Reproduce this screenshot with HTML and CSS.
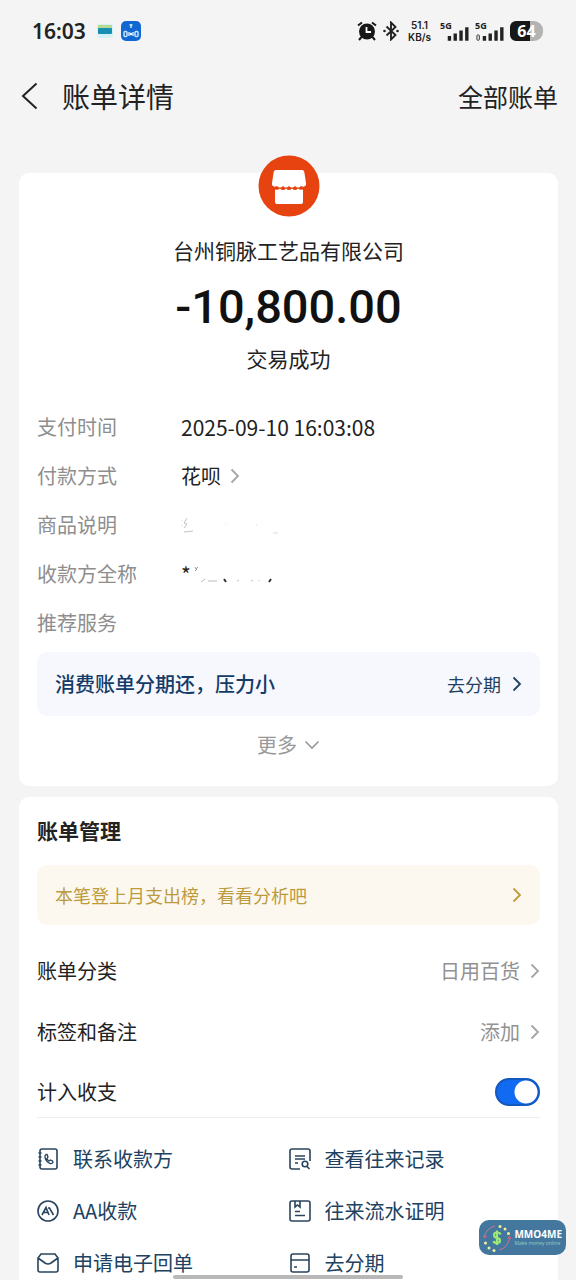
FILE: index.html
```html
<!DOCTYPE html>
<html lang="zh-CN">
<head>
<meta charset="utf-8">
<meta name="viewport" content="width=device-width, initial-scale=1">
<title>账单详情</title>
<link rel="stylesheet" href="styles.css">
</head>
<body>
<svg class="defs" aria-hidden="true">
  <symbol id="chev" viewBox="0 0 10 16"><path d="M1.500 1.500 8 8l-6.500 6.500" fill="none" stroke="currentColor" stroke-width="1.800"/></symbol>
</svg>
<div class="status-bar">
  <span class="time">16:03</span>
  <svg class="wallet" viewBox="0 0 16 14" aria-hidden="true"><rect width="16" height="14" rx="3" fill="#d5f1f7"/><path d="M1 1h14v4H1z" fill="#b7dc91"/><rect x="1" y="4" width="14" height="6" rx="1" fill="#168fb4"/></svg>
  <svg class="app" viewBox="0 0 20 20" aria-hidden="true"><rect width="20" height="20" rx="5" fill="#1268d3"/><g fill="none" stroke="#c4e5ff" stroke-width="1.500"><path d="M10 3v4M8.500 4h3"/><rect x="3" y="10.500" width="3" height="5" rx="1"/><rect x="14" y="10.500" width="3" height="5" rx="1"/><path d="M8 11v4M12 11v4"/></g><circle cx="10" cy="13" r="1.300" fill="#fff"/></svg>
  <span class="spacer"></span>
  <svg class="alarm" viewBox="0 0 20 20" aria-hidden="true"><circle cx="10" cy="10.500" r="8" fill="#171717"/><path d="M1 4.500 5 1.500M19 4.500l-4-3M4.500 16 2 19M15.500 16l2.500 3" stroke="#171717" stroke-width="2"/><path d="M9.500 6v5h4.500" fill="none" stroke="#fff" stroke-width="1.800"/></svg>
  <svg class="bt" viewBox="0 0 16 20" aria-hidden="true"><path d="m3.500 5.500 9 8.500L8 18.500v-17L12.500 6l-9 8.500" fill="none" stroke="#222" stroke-width="1.900"/><circle cx="1.500" cy="10" r="1.300" fill="#222"/><circle cx="14.500" cy="10" r="1.300" fill="#222"/></svg>
  <span class="speed"><span>51.1</span><span>KB/s</span></span>
  <span class="signal"><span class="net">5G</span><svg viewBox="0 0 30 14" aria-hidden="true"><path d="M8 9h3.500v5H8zM14 6.500h3.500V14H14zM20 3.500h3.500V14H20zM26 0h3.500v14H26z" fill="#222"/></svg></span>
  <span class="signal"><span class="net">5G</span><svg viewBox="0 0 30 14" aria-hidden="true"><rect x="2" y="8" width="2.500" height="5.500" rx="1" fill="none" stroke="#333"/><path d="M8 9h3.500v5H8zM14 6.500h3.500V14H14zM20 3.500h3.500V14H20zM26 0h3.500v14H26z" fill="#222"/></svg></span>
  <span class="battery">64</span>
</div>
<header class="nav">
  <button class="back" aria-label="返回"><svg viewBox="0 0 18 28" aria-hidden="true"><path d="M15.500 1.500 2 14l13.500 12.500" fill="none" stroke="#222" stroke-width="2"/></svg></button>
  <h1>账单详情</h1>
  <a class="all" href="#">全部账单</a>
</header>
<main>
  <section class="card summary">
    <svg class="shop" viewBox="0 0 62 62" aria-hidden="true"><circle cx="31" cy="31" r="30.500" fill="#e64310"/><path d="M18 15h26q2 0 2.300 2l1.700 11v2q-2 3-5 1-3 3-6 0-3 3-6 0-3 3-6 0-3 3-6 0-3 2-5-1v-2l1.700-11q.3-2 2.300-2z" fill="#fff"/><path d="M17 34.500q3 1 5-1 3 3 6 0 3 3 6 0 3 3 6 0 2 2 5 1V47q0 2-2 2H19q-2 0-2-2z" fill="#fff"/></svg>
    <p class="merchant">台州铜脉工艺品有限公司</p>
    <p class="amount">-10,800.00</p>
    <p class="state">交易成功</p>
    <dl class="details">
      <dt>支付时间</dt><dd>2025-09-10 16:03:08</dd>
      <dt>付款方式</dt><dd><a class="method" href="#">花呗<svg class="chev gray" aria-hidden="true"><use href="#chev"/></svg></a></dd>
      <dt>商品说明</dt><dd><svg class="mask" viewBox="0 0 100 20" aria-hidden="true"><g fill="none" stroke="#c3c3c3"><path d="m6 3-3 5 3 1-3 4M3 17l9-1" /><path d="M1 5v1M1 10v1M45 9v1M75 10h1M92 18h5" stroke="#ddd"/></g></svg></dd>
      <dt>收款方全称</dt><dd>*<svg class="mask" viewBox="0 0 100 20" aria-hidden="true"><g fill="none" stroke="#999"><path d="m4 3 1 2 2-2M4 7l2-2"/><path d="M10 18l4-3M17 17h9M46 17l2-1M60 17l2-1M68 16v1" stroke="#bbb"/><path d="m33 15 2 3M78 18l2-3" stroke="#333" stroke-width="2"/></g></svg></dd>
      <dt>推荐服务</dt><dd></dd>
    </dl>
    <a class="banner blue" href="#"><strong>消费账单分期还，压力小</strong><span class="go">去分期<svg class="chev" aria-hidden="true"><use href="#chev"/></svg></span></a>
    <button class="more">更多<svg viewBox="0 0 16 10" aria-hidden="true"><path d="m1.500 1.500 6.500 6.500 6.500-6.500" fill="none" stroke="currentColor" stroke-width="1.600"/></svg></button>
  </section>
  <section class="card manage">
    <h2>账单管理</h2>
    <a class="banner gold" href="#"><span>本笔登上月支出榜，看看分析吧</span><svg class="chev" aria-hidden="true"><use href="#chev"/></svg></a>
    <a class="row" href="#"><span>账单分类</span><span class="value">日用百货<svg class="chev gray" aria-hidden="true"><use href="#chev"/></svg></span></a>
    <a class="row" href="#"><span>标签和备注</span><span class="value">添加<svg class="chev gray" aria-hidden="true"><use href="#chev"/></svg></span></a>
    <label class="row last"><span>计入收支</span><input class="switch" type="checkbox" checked></label>
    <nav class="actions">
      <a href="#"><svg viewBox="0 0 22 22" aria-hidden="true"><rect x="3" y="1" width="17" height="20" rx="2"/><path d="M1.500 5h3M1.500 9h3M1.500 13h3M1.500 17h3"/><path d="M9 6.500q-1.500 1-1 3 1 4 5 6 2 .5 3-1l-.5-1.500-2-1-1.500 1q-1.500-1-2-2.500l1-1.500-1-2.500z" stroke-width="1.300"/></svg>联系收款方</a>
      <a href="#"><svg viewBox="0 0 22 22" aria-hidden="true"><path d="M11 21H3q-2 0-2-2V3q0-2 2-2h16q2 0 2 2v10M6 8h10M6 11h10M6 15h3"/><circle cx="16" cy="16" r="2.800"/><path d="m18 18.500 2.500 2.500"/></svg>查看往来记录</a>
      <a href="#"><svg viewBox="0 0 22 22" aria-hidden="true"><circle cx="11" cy="11" r="10"/><path d="m5 15 4-7.500 3 7.500M7 12.500h4M11 8h1.500l4 7"/></svg>AA收款</a>
      <a href="#"><svg viewBox="0 0 22 22" aria-hidden="true"><rect x="1" y="1" width="20" height="20" rx="2"/><path d="M6 1v6l2.500-2L11 7V1M6 11.500h5M6 15.500h10"/></svg>往来流水证明</a>
      <a href="#"><svg viewBox="0 0 22 22" aria-hidden="true"><path d="M4 2h14l3 4v12q0 2-2 2H3q-2 0-2-2V6zM1 6l7 5q3 2 6 0l7-5"/></svg>申请电子回单</a>
      <a href="#"><svg viewBox="0 0 22 22" aria-hidden="true"><rect x="2" y="2" width="18" height="18" rx="2"/><path d="M2 8h18M5 15h3"/></svg>去分期</a>
    </nav>
  </section>
</main>
<div class="home-bar"></div>
<div class="watermark">
  <svg viewBox="0 0 28 28" aria-hidden="true"><path d="M12 2Q3 4 1.500 13M16 26q9-2 10.500-12" fill="none" stroke="#c87695"/><path d="m0 11 1.500 3L4 12M24.500 15l2-3 1.500 3" fill="none" stroke="#e0607d"/><g fill="#f5ef9c"><circle cx="17" cy="2.500" r="1.500"/><circle cx="22" cy="5" r="1.500"/><circle cx="25.500" cy="9.500" r="1.500"/><circle cx="2.500" cy="19" r="1.500"/><circle cx="6" cy="24" r="1.500"/><circle cx="11" cy="26.500" r="1.500"/></g><path d="M17.500 10.500q-.5-2-3.500-2t-3 2.500 3 2.800 3 2.700-3 2.500-3.500-2M14 6.500v14.500" fill="none" stroke="#9de879" stroke-width="2.200"/></svg>
  <span class="brand"><b>MMO4ME</b><small>Make money online</small></span>
</div>
</body>
</html>
```
FILE: styles.css
```css
* { box-sizing: border-box; }
body {
  margin: 0;
  min-height: 100vh;
  display: flex;
  flex-direction: column;
  background: #f4f4f5;
  color: #222;
  font: 20px/28px "Noto Sans CJK SC", sans-serif;
}
h1, h2, p, dl, dd { margin: 0; }
a { color: inherit; text-decoration: none; }
button { border: 0; padding: 0; background: none; color: inherit; font: inherit; }
svg { display: block; flex: none; }
.defs { position: absolute; width: 0; height: 0; }
.spacer { flex: 1; }

.status-bar { display: flex; align-items: center; height: 62px; padding: 0 33px 0 32px; }
.time { font: 600 21px/28px "Noto Sans", sans-serif; }
.wallet { width: 16px; height: 14px; margin-left: 11px; }
.app { width: 20px; height: 20px; margin-left: 8px; }
.alarm { width: 20px; height: 20px; }
.bt { width: 16px; height: 20px; margin-left: 6px; }
.speed { display: flex; flex-direction: column; align-items: center; margin-left: 9px; font: 600 10px/12px Inter, sans-serif; }
.signal { display: flex; flex-direction: column; margin-left: 9px; width: 29px; height: 20px; }
.signal + .signal { margin-left: 6px; }
.signal .net { height: 6px; font: 700 9px/9px "Noto Sans", sans-serif; }
.signal svg { width: 29px; height: 14px; }
.battery {
  margin-left: 6px; width: 33px; border-radius: 6px 9px 9px 6px;
  background: linear-gradient(90deg, #171717 62%, #b3b3b3 62%);
  color: #fff; text-align: center; font: 700 16px/20px "Noto Sans", sans-serif;
}

.nav { display: flex; align-items: center; height: 68px; padding: 0 18px 0 21px; }
.back { width: 41px; }
.back svg { width: 18px; height: 28px; }
.nav h1 { flex: 1; font-size: 28px; font-weight: 400; line-height: 40px; }
.all { font-size: 25px; line-height: 36px; }

main { flex: 1; display: flex; flex-direction: column; gap: 11px; padding: 43px 18px 0 19px; }
.card { background: #fff; border-radius: 10px; padding: 0 18px; }
.summary { display: flex; flex-direction: column; padding-bottom: 27px; }
.shop { align-self: center; width: 62px; height: 62px; margin-top: -18px; }
.merchant { margin-top: 18px; text-align: center; font-size: 21px; line-height: 30px; }
.amount { margin-top: 14px; text-align: center; color: #111; font: 500 47px/56px Roboto, sans-serif; }
.state { margin-top: 8px; text-align: center; font-size: 21px; line-height: 30px; }
.details { display: grid; grid-template-columns: 144px 1fr; grid-auto-rows: 49px; align-items: center; margin-top: 29px; }
.details dt { color: #8e8e8e; }
.details dd { display: flex; align-items: center; font-size: 21px; }
.method { display: flex; align-items: center; gap: 9px; font-size: 20px; }
.mask { width: 100px; height: 20px; }
.chev { width: 10px; height: 16px; }
.gray { color: #a5a5a5; }
.banner { display: flex; align-items: center; justify-content: space-between; padding: 0 18px; border-radius: 10px; }
.blue { height: 64px; margin-top: 5px; background: #f7f8fd; color: #143b68; }
.blue strong { font-weight: 500; }
.go { display: flex; align-items: center; gap: 11px; font-size: 18px; color: #21405f; }
.more { display: flex; align-items: center; align-self: center; gap: 7px; margin-top: 15px; color: #999; }
.more svg { width: 16px; height: 10px; }

.manage { flex: 1; border-radius: 10px 10px 0 0; padding-top: 18px; }
.manage h2 { font-size: 21px; line-height: 30px; font-weight: 700; }
.gold { height: 60px; margin-top: 20px; margin-bottom: 15px; background: #fcf8f0; color: #bd9b3d; font-size: 18px; }
.row { display: flex; align-items: center; justify-content: space-between; height: 61px; }
.value { display: flex; align-items: center; gap: 10px; color: #929292; }
.last { height: 56px; padding-top: 4px; border-bottom: 1px solid #eee; }
.switch {
  appearance: none; margin: 0; width: 45px; height: 28px; border-radius: 14px; border: 2px solid #1459be;
  background: radial-gradient(circle at 29px 12px, #fff 11px, #126af3 12px);
}
.actions { display: grid; grid-template-columns: 1fr 1fr; gap: 24px 0; padding-top: 27px; color: #20415f; }
.actions a { display: flex; align-items: center; gap: 14px; }
.actions svg { width: 22px; height: 22px; fill: none; stroke: #29445e; stroke-width: 1.6; }

.home-bar { position: fixed; bottom: 1px; left: 30%; right: 30%; height: 4px; border-radius: 2px; background: #b8b8b8; }
.watermark {
  position: fixed; right: 10px; bottom: 25px; height: 35px; padding: 0 4px;
  display: flex; align-items: center; gap: 3px; border-radius: 10px; background: #44779e; color: #fff;
}
.watermark svg { width: 28px; height: 28px; }
.brand { display: flex; flex-direction: column; font: 700 10px/11px "Open Sans", sans-serif; }
.brand b { font-weight: 700; }
.brand small { font-size: 5px; line-height: 7px; font-weight: 400; color: #9ccbc5; }
```
